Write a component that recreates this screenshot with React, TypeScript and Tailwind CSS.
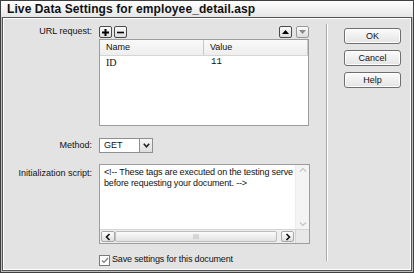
import React from 'react';

function SmallBtn({ children, dim = false }: { children: React.ReactNode; dim?: boolean }) {
  return (
    <div
      className={`w-[13px] h-[12px] rounded-[2px] border flex items-center justify-center bg-gradient-to-b from-[#fbfbfb] to-[#dcdcdc] ${
        dim ? 'border-[#9a9a9a]' : 'border-[#4a4a4a]'
      }`}
    >
      {children}
    </div>
  );
}

function DlgButton({ label }: { label: string }) {
  return (
    <div className="w-[57px] h-[16px] rounded-[3px] border border-[#6f6f6f] bg-gradient-to-b from-[#fbfbfb] to-[#e4e4e4] shadow-[inset_0_0_0_1px_#ffffff] flex items-center justify-center leading-none">
      {label}
    </div>
  );
}

export default function App() {
  return (
    <div className="w-[414px] h-[273px] border border-[#3f3f3f] bg-[#bdbdbd] flex flex-col font-['Liberation_Sans',Arial,sans-serif] text-[9px] text-[#111]">
      {/* Title bar */}
      <div className="h-[16px] shrink-0 bg-gradient-to-b from-[#ffffff] to-[#e6e6e6] px-[6px] flex items-center text-[12px] font-bold tracking-[0.1px] text-[#111]">
        Live Data Settings for employee_detail.asp
      </div>

      {/* Body frame */}
      <div className="flex-1 mx-px mb-px border border-[#555] flex">
        <div className="flex-1 border border-white bg-[#e3e3e3] flex">
          {/* Left panel */}
          <div className="w-[322px] pt-[7px] grid grid-cols-[88px_211px] gap-x-[7px] content-start">
            {/* URL request row */}
            <div className="h-[12px] flex items-center justify-end">URL request:</div>
            <div className="h-[12px] flex items-center">
              <div className="flex gap-[2px]">
                <SmallBtn>
                  <svg width="9" height="9" viewBox="0 0 9 9">
                    <path d="M4.5 1v7M1 4.5h7" stroke="#000" strokeWidth="2" />
                  </svg>
                </SmallBtn>
                <SmallBtn>
                  <svg width="9" height="9" viewBox="0 0 9 9">
                    <path d="M1 4.5h7" stroke="#000" strokeWidth="1.6" />
                  </svg>
                </SmallBtn>
              </div>
              <div className="ml-auto flex gap-[4px] mr-px">
                <SmallBtn>
                  <svg width="9" height="6" viewBox="0 0 9 6">
                    <path d="M4.5 1L8 5H1z" fill="#000" />
                  </svg>
                </SmallBtn>
                <SmallBtn dim>
                  <svg width="9" height="6" viewBox="0 0 9 6">
                    <path d="M1 1h7L4.5 5z" fill="#8a8a8a" />
                  </svg>
                </SmallBtn>
              </div>
            </div>

            {/* Parameter list */}
            <div />
            <div className="mt-px h-[87px] w-[210px] border border-[#9d9d9d] bg-white">
              <div className="h-[16px] flex bg-gradient-to-b from-[#fafafa] to-[#eeeeee] border-b border-[#d6d6d6]">
                <div className="w-[104px] pl-[6px] flex items-center border-r border-[#c8c8c8]">Name</div>
                <div className="w-[104px] pl-[6px] flex items-center border-r border-[#c8c8c8]">Value</div>
              </div>
              <div className="h-[13px] flex items-center">
                <div className="w-[104px] pl-[6px] font-['Liberation_Serif',serif] text-[10px]">ID</div>
                <div className="pl-[7px] font-['Liberation_Mono',monospace] text-[9px]">11</div>
              </div>
            </div>

            {/* Method row */}
            <div className="mt-[12px] h-[15px] flex items-center justify-end">Method:</div>
            <div className="mt-[12px] h-[15px] flex">
              <div className="w-[54px] h-[15px] border border-[#8f8f8f] bg-white flex">
                <div className="flex-1 pl-[4px] flex items-center">GET</div>
                <div className="w-[13px] border-l border-[#8f8f8f] bg-gradient-to-b from-[#f6f6f6] to-[#dedede] flex items-center justify-center">
                  <svg width="7" height="5" viewBox="0 0 7 5">
                    <path d="M0.8 0.8L3.5 3.8L6.2 0.8" stroke="#222" strokeWidth="1.6" fill="none" />
                  </svg>
                </div>
              </div>
            </div>

            {/* Initialization script */}
            <div className="mt-[11px] pt-[3px] flex justify-end">Initialization script:</div>
            <div className="mt-[11px] h-[80px] w-[211px] border border-[#9d9d9d] bg-white flex flex-col">
              <div className="flex-1 flex min-h-0">
                <div className="flex-1 pl-[4px] pt-[2px] leading-[11px] whitespace-nowrap tracking-[-0.15px]">
                  <div>&lt;!-- These tags are executed on the testing serve</div>
                  <div>before requesting your document. --&gt;</div>
                </div>
                <div className="w-[14px] bg-[#f4f4f4] border-l border-[#ececec] flex flex-col justify-between items-center py-[2px]">
                  <svg width="8" height="6" viewBox="0 0 8 6">
                    <path d="M1 4.5L4 1.5L7 4.5" stroke="#c4c4c4" strokeWidth="1.2" fill="none" />
                  </svg>
                  <svg width="8" height="6" viewBox="0 0 8 6">
                    <path d="M1 1.5L4 4.5L7 1.5" stroke="#c4c4c4" strokeWidth="1.2" fill="none" />
                  </svg>
                </div>
              </div>
              <div className="h-[14px] flex bg-[#eeeeee] border-t border-[#d4d4d4]">
                <div className="w-[14px] ml-[1px] my-px border border-[#a8a8a8] rounded-[2px] bg-gradient-to-b from-white to-[#dedede] flex items-center justify-center">
                  <svg width="6" height="8" viewBox="0 0 6 8">
                    <path d="M4.5 1L1.5 4L4.5 7" stroke="#111" strokeWidth="1.6" fill="none" />
                  </svg>
                </div>
                <div className="w-[162px] my-px border border-[#bdbdbd] rounded-[2px] bg-gradient-to-b from-[#fbfbfb] to-[#e2e2e2] flex items-center justify-center">
                  <svg width="6" height="5" viewBox="0 0 6 5">
                    <path d="M1 0v5M3 0v5M5 0v5" stroke="#b0b0b0" strokeWidth="0.8" />
                  </svg>
                </div>
                <div className="flex-1" />
                <div className="w-[13px] my-px mr-[1px] border border-[#a8a8a8] rounded-[2px] bg-gradient-to-b from-white to-[#dedede] flex items-center justify-center">
                  <svg width="6" height="8" viewBox="0 0 6 8">
                    <path d="M1.5 1L4.5 4L1.5 7" stroke="#111" strokeWidth="1.6" fill="none" />
                  </svg>
                </div>
                <div className="w-[14px] bg-[#e8e8e8] border-l border-[#d4d4d4]" />
              </div>
            </div>

            {/* Save checkbox */}
            <div />
            <div className="mt-[10px] h-[12px] flex items-center gap-[2px]">
              <div className="w-[11px] h-[11px] border border-[#7a7a7a] bg-white flex items-center justify-center">
                <svg width="8" height="7" viewBox="0 0 8 7">
                  <path d="M1 3.5L3 5.5L7 1" stroke="#7a7a7a" strokeWidth="1.2" fill="none" />
                </svg>
              </div>
              <span className="tracking-[-0.15px]">Save settings for this document</span>
            </div>
          </div>

          {/* Separator */}
          <div className="mt-[5px] mb-[8px] w-[2px] border-l border-[#a9a9a9] bg-white" />

          {/* Right button column */}
          <div className="pl-[16px] pt-[9px] flex flex-col gap-[6px]">
            <DlgButton label="OK" />
            <DlgButton label="Cancel" />
            <DlgButton label="Help" />
          </div>
        </div>
      </div>
    </div>
  );
}
